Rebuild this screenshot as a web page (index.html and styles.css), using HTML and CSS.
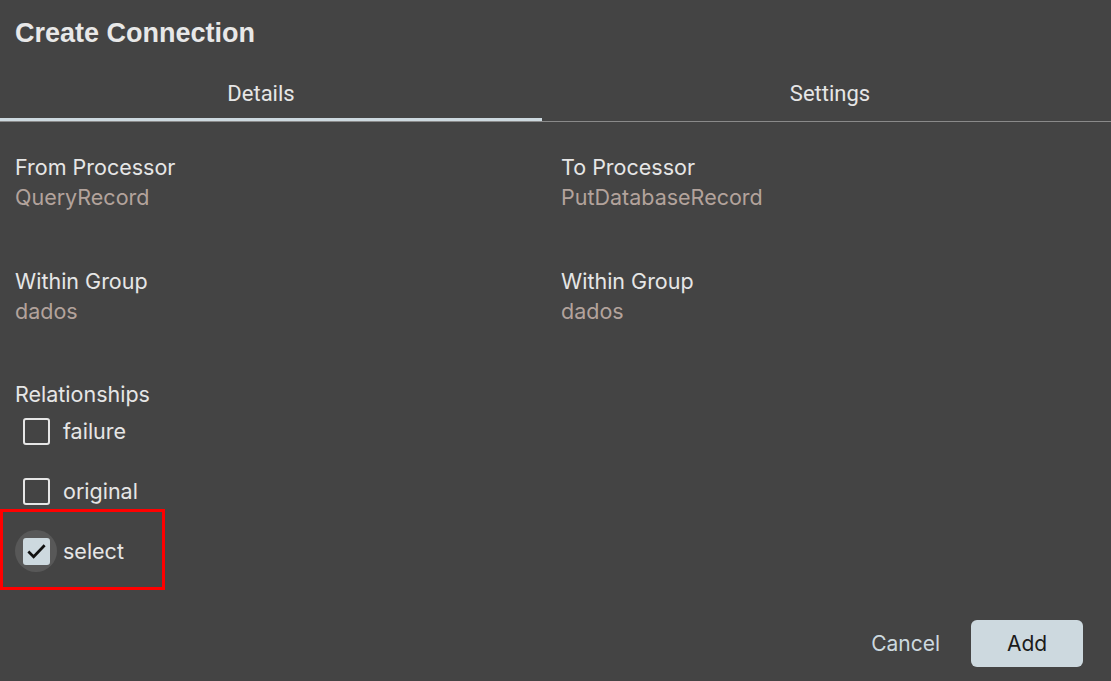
FILE: index.html
```html
<!DOCTYPE html>
<html>
<head>
<meta charset="utf-8">
<link rel="stylesheet" href="styles.css">
</head>
<body>
<div class="dialog">
  <h1 class="title">Create Connection</h1>
  <div class="tabs">
    <div class="tab active">Details</div>
    <div class="tab">Settings</div>
  </div>
  <div class="content">
    <div class="grid">
      <div class="field">
        <div class="label">From Processor</div>
        <div class="value">QueryRecord</div>
      </div>
      <div class="field">
        <div class="label">To Processor</div>
        <div class="value">PutDatabaseRecord</div>
      </div>
      <div class="field">
        <div class="label">Within Group</div>
        <div class="value">dados</div>
      </div>
      <div class="field">
        <div class="label">Within Group</div>
        <div class="value">dados</div>
      </div>
    </div>
    <div class="label">Relationships</div>
    <div class="rels">
      <div class="rel"><span class="box-wrap"><span class="box"></span></span><span class="rel-label">failure</span></div>
      <div class="rel"><span class="box-wrap"><span class="box"></span></span><span class="rel-label">original</span></div>
      <div class="rel highlight"><span class="box-wrap ripple"><span class="box checked"><svg viewBox="0 0 24 24" width="24" height="24"><path d="M3.5 12.5 L9 18 L20.5 6" fill="none" stroke="#111" stroke-width="2.8"/></svg></span></span><span class="rel-label">select</span></div>
    </div>
  </div>
  <div class="actions">
    <button class="btn cancel">Cancel</button>
    <button class="btn add">Add</button>
  </div>
</div>
</body>
</html>
```

FILE: styles.css
```css
html, body {
  margin: 0;
  padding: 0;
  background: #444444;
  width: 1111px;
  height: 681px;
  overflow: hidden;
}
body {
  font-family: Inter, "Noto Sans", sans-serif;
  color: #e6e6e6;
}
.dialog {
  display: flex;
  flex-direction: column;
  height: 681px;
}
.title {
  margin: 0;
  padding: 15px 15px 0 15px;
  font-family: "Liberation Sans", Arial, sans-serif;
  font-weight: 700;
  font-size: 27px;
  letter-spacing: 0;
  line-height: 36px;
  color: #e8e8e8;
}
.tabs {
  display: flex;
  margin-top: 20px;
  border-bottom: 1px solid #8a8a8a;
}
.tab {
  flex: 0 0 542px;
  text-align: center;
  font-family: Roboto, sans-serif;
  font-size: 22px;
  color: #e6e6e6;
  height: 50px;
  line-height: 46px;
  box-sizing: border-box;
  padding-right: 20px;
}
.tab + .tab {
  flex: 1 1 auto;
  padding-right: 0;
  padding-left: 7px;
}
.tab.active {
  border-bottom: 3px solid #cdd9df;
}
.content {
  padding: 30px 15px 0 15px;
}
.grid {
  display: grid;
  grid-template-columns: 546px 1fr;
  row-gap: 54px;
  margin-bottom: 53px;
}
.label {
  font-size: 21.5px;
  line-height: 30px;
  color: #e6e6e6;
}
.value {
  font-size: 21.5px;
  line-height: 30px;
  color: #b3a39c;
}
.rels {
  display: flex;
  flex-direction: column;
  margin-top: -8px;
  margin-left: -15px;
}
.rel {
  display: flex;
  align-items: center;
  height: 60px;
  padding-left: 16px;
  box-sizing: border-box;
}
.rel.highlight {
  position: relative;
  padding-left: 15px;
}
.rel.highlight::after {
  content: "";
  position: absolute;
  left: 0;
  top: -12px;
  bottom: -9px;
  width: 165px;
  box-sizing: border-box;
  border: 3px solid #ff0000;
}
.box-wrap {
  width: 42px;
  height: 42px;
  margin-left: -1px;
  border-radius: 50%;
  display: flex;
  align-items: center;
  justify-content: center;
}
.rel.highlight .box-wrap {
  margin-left: 0;
}
.box-wrap.ripple {
  background: #585858;
}
.box {
  width: 27px;
  height: 27px;
  box-sizing: border-box;
  border: 2.5px solid #e6e6e6;
  border-radius: 3px;
  display: flex;
  align-items: center;
  justify-content: center;
}
.box.checked {
  background: #cdd9df;
  border-color: #cdd9df;
}
.rel-label {
  margin-left: 6px;
  font-size: 21.5px;
  color: #e6e6e6;
}
.actions {
  margin-top: auto;
  display: flex;
  justify-content: flex-end;
  align-items: center;
  gap: 31px;
  padding: 0 28px 14px 0;
}
.btn {
  font-family: Inter, sans-serif;
  font-size: 21px;
  border: none;
  cursor: pointer;
}
.cancel {
  background: transparent;
  color: #cdd9df;
  padding: 0;
}
.add {
  width: 112px;
  height: 47px;
  border-radius: 6px;
  background: #cdd9df;
  color: #1b1b1b;
}
```
